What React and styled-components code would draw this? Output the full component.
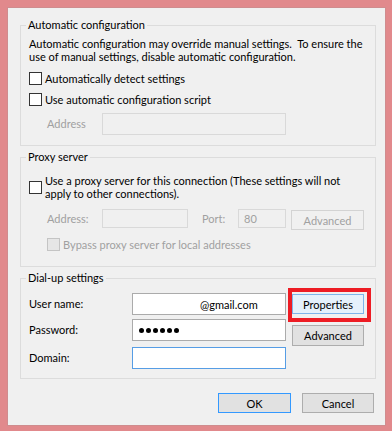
import React from 'react';
import styled, { createGlobalStyle, css } from 'styled-components';

const GlobalStyle = createGlobalStyle`
  html, body {
    margin: 0;
    padding: 0;
    background: #e1898c;
  }
  * {
    box-sizing: border-box;
  }
`;

const Frame = styled.div`
  width: 392px;
  height: 431px;
  padding: 7px 6px 5px 7px;
  background: #e1898c;
  font-family: Lato, "Liberation Sans", sans-serif;
  font-size: 11px;
  color: #000;
  white-space: nowrap;
`;

const Dialog = styled.div`
  width: 379px;
  height: 419px;
  padding: 9px 9px 0 12px;
  background: #f0f0f0;
  border: 1px solid #cf8c8e;
  display: flex;
  flex-direction: column;
`;

const Group = styled.fieldset`
  margin: 0;
  padding: 0;
  min-inline-size: 0;
  border: 1px solid #dcdcdc;

  & + & {
    margin-top: 3px;
  }
`;

const Legend = styled.legend`
  margin-left: 5px;
  padding: 0 2px;
  line-height: 16px;
`;

const Body = styled.div`
  padding: ${(p) => p.$pt}px 8px ${(p) => p.$pb}px 8px;
  display: flex;
  flex-direction: column;
`;

const Desc = styled.p`
  margin: 0;
  line-height: 13px;
`;

const CheckRow = styled.div`
  display: flex;
  align-items: center;
  gap: 3px;
  min-height: ${(p) => p.$h || 21}px;
  margin-top: ${(p) => p.$mt || 0}px;
  margin-left: ${(p) => p.$ml || 0}px;
  line-height: 13px;
  color: ${(p) => (p.$disabled ? '#a0a0a0' : '#000')};
`;

const Box = styled.span`
  flex: none;
  width: 13px;
  height: 13px;
  border: 1px solid ${(p) => (p.$disabled ? '#c4c4c4' : '#333')};
  background: ${(p) => (p.$disabled ? '#e6e6e6' : '#fff')};
`;

const FieldRow = styled.div`
  display: flex;
  align-items: ${(p) => p.$align || 'center'};
  margin-top: ${(p) => p.$mt || 0}px;
  padding-left: ${(p) => p.$pl || 0}px;
`;

const Label = styled.span`
  flex: none;
  width: ${(p) => p.$w}px;
  margin-left: ${(p) => p.$ml || 0}px;
  color: ${(p) => (p.$disabled ? '#a0a0a0' : '#000')};
  line-height: ${(p) => p.$lh || 22}px;
`;

const Input = styled.div`
  flex: none;
  width: ${(p) => p.$w}px;
  height: ${(p) => p.$h || 22}px;
  border: 1px solid #ababab;
  background: #fff;
  display: flex;
  align-items: center;
  padding-left: ${(p) => p.$pl || 4}px;
  color: #000;

  ${(p) =>
    p.$disabled &&
    css`
      border-color: #d9d9d9;
      background: #f0f0f0;
      color: #a0a0a0;
    `}

  ${(p) =>
    p.$focus &&
    css`
      border-color: #569de5;
    `}
`;

const Dots = styled.span`
  display: flex;
  gap: 2px;
  padding-left: 1px;
`;

const Dot = styled.span`
  width: 5px;
  height: 5px;
  border-radius: 50%;
  background: #000;
`;

const Button = styled.button`
  flex: none;
  width: ${(p) => p.$w}px;
  height: ${(p) => p.$h || 20}px;
  margin: ${(p) => p.$m || 0};
  padding: 0;
  font: inherit;
  color: #000;
  background: #e1e1e1;
  border: 1px solid #adadad;

  ${(p) =>
    p.$variant === 'disabled' &&
    css`
      background: #f0f0f0;
      border-color: #d3d3d3;
      color: #a0a0a0;
    `}

  ${(p) =>
    p.$variant === 'hot' &&
    css`
      background: #e5f1fb;
      border-color: #7eb4ea;
    `}

  ${(p) =>
    p.$variant === 'primary' &&
    css`
      border-color: #3399ff;
    `}
`;

const DialUp = styled.div`
  display: flex;
  align-items: flex-start;
`;

const Form = styled.div`
  display: flex;
  flex-direction: column;
`;

const Side = styled.div`
  display: flex;
  flex-direction: column;
  margin-left: 6px;
`;

const Marked = styled.div`
  position: relative;
  margin-top: 1px;
`;

const Highlight = styled.span`
  position: absolute;
  top: -6px;
  left: -4px;
  right: -7px;
  bottom: -8px;
  border: 4px solid #ed1c24;
  pointer-events: none;
`;

const Footer = styled.div`
  display: flex;
  justify-content: flex-end;
  gap: 11px;
  margin-top: 14px;
  padding-right: 2px;
`;

export default function App() {
  return (
    <Frame>
      <GlobalStyle />
      <Dialog>
        <Group>
          <Legend>Automatic configuration</Legend>
          <Body $pt={4} $pb={10}>
            <Desc>
              Automatic configuration may override manual settings.&nbsp; To ensure the
              <br />
              use of manual settings, disable automatic configuration.
            </Desc>
            <CheckRow $mt={5}>
              <Box />
              <span>Automatically detect settings</span>
            </CheckRow>
            <CheckRow>
              <Box />
              <span>Use automatic configuration script</span>
            </CheckRow>
            <FieldRow $mt={3} $pl={18}>
              <Label $w={55} $disabled>Address</Label>
              <Input $w={184} $disabled />
            </FieldRow>
          </Body>
        </Group>

        <Group>
          <Legend>Proxy server</Legend>
          <Body $pt={9} $pb={14}>
            <CheckRow>
              <Box />
              <span>
                Use a proxy server for this connection (These settings will not
                <br />
                apply to other connections).
              </span>
            </CheckRow>
            <FieldRow $mt={9} $pl={18} $align="flex-start">
              <Label $w={55} $lh={19} $disabled>Address:</Label>
              <Input $w={86} $h={19} $disabled />
              <Label $w={36} $ml={14} $lh={19} $disabled>Port:</Label>
              <Input $w={48} $h={19} $pl={5} $disabled>80</Input>
              <Button $w={73} $m="1px 0 0 5px" $variant="disabled">Advanced</Button>
            </FieldRow>
            <CheckRow $mt={6} $h={16} $ml={18} $disabled>
              <Box $disabled />
              <span>Bypass proxy server for local addresses</span>
            </CheckRow>
          </Body>
        </Group>

        <Group>
          <Legend>Dial-up settings</Legend>
          <Body $pt={7} $pb={9}>
            <DialUp>
              <Form>
                <FieldRow>
                  <Label $w={103}>User name:</Label>
                  <Input $w={154} $pl={67}>@gmail.com</Input>
                </FieldRow>
                <FieldRow $mt={4}>
                  <Label $w={103}>Password:</Label>
                  <Input $w={154} $pl={5}>
                    <Dots>
                      {Array.from({ length: 6 }).map((_, i) => (
                        <Dot key={i} />
                      ))}
                    </Dots>
                  </Input>
                </FieldRow>
                <FieldRow $mt={6}>
                  <Label $w={103}>Domain:</Label>
                  <Input $w={154} $focus />
                </FieldRow>
              </Form>
              <Side>
                <Marked>
                  <Button $w={72} $variant="hot">Properties</Button>
                  <Highlight />
                </Marked>
                <Button $w={72} $h={21} $m="11px 0 0 0">Advanced</Button>
              </Side>
            </DialUp>
          </Body>
        </Group>

        <Footer>
          <Button $w={73} $variant="primary">OK</Button>
          <Button $w={72}>Cancel</Button>
        </Footer>
      </Dialog>
    </Frame>
  );
}
